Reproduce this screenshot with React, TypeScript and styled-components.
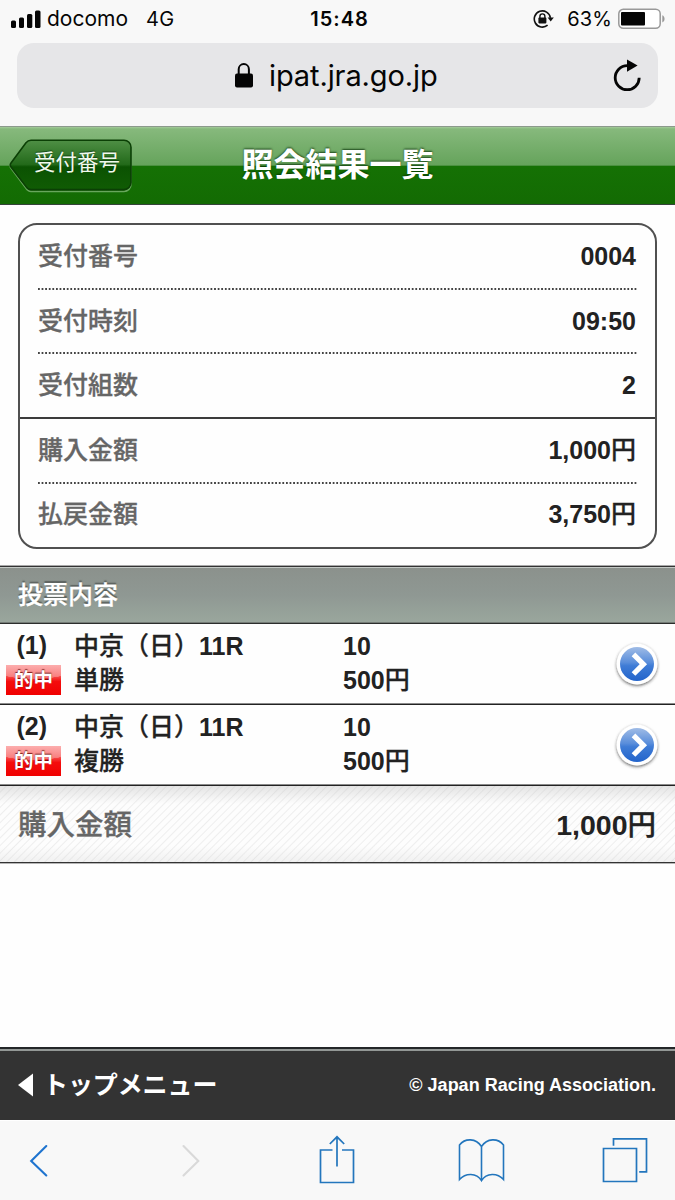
import React from "react";
import styled, { createGlobalStyle } from "styled-components";

const GlobalStyle = createGlobalStyle`
  * { box-sizing: border-box; }
  body { margin: 0; background: #fefefe; }
`;

const jp = `"Liberation Sans", "Noto Sans CJK JP", sans-serif`;
const system = `Inter, "Liberation Sans", sans-serif`;

const Screen = styled.div`
  width: 675px;
  height: 1200px;
  display: flex;
  flex-direction: column;
  overflow: hidden;
  background: #fefefe;
  color: #222;
  font-family: ${jp};
  font-weight: 700;
`;

/* ---------- Browser chrome ---------- */

const Chrome = styled.header`
  height: 126px;
  flex: none;
  background: #f8f8f8;
  color: #050505;
  font-family: ${system};
  font-weight: 400;
`;

const StatusBar = styled.div`
  height: 43px;
  display: grid;
  grid-template-columns: 1fr auto 1fr;
  align-items: center;
  padding: 0 10px 5px 11px;
  font-size: 20px;
  line-height: 24px;
`;

const Carrier = styled.div`
  display: flex;
  align-items: center;
`;

const CarrierName = styled.span`
  margin-left: 6px;
  width: 99px;
  font-size: 21px;
  letter-spacing: 0;
`;

const Network = styled.span`
  font-size: 20px;
  letter-spacing: 0.4px;
`;

const Clock = styled.div`
  font-weight: 600;
  font-size: 20px;
  letter-spacing: 1px;
  padding-left: 3px;
`;

const Power = styled.div`
  display: flex;
  align-items: center;
  justify-content: flex-end;
`;

const Percent = styled.span`
  margin: 0 6px 0 13px;
  letter-spacing: 0.1px;
`;

const AddressBar = styled.div`
  height: 65px;
  margin: 0 17px;
  padding: 0 17px 0 217px;
  display: flex;
  align-items: center;
  border-radius: 17px;
  background: #e6e6e8;
`;

const Url = styled.span`
  margin-left: 15px;
  flex: 1;
  font-size: 29px;
  letter-spacing: -0.1px;
  line-height: 36px;
`;

/* ---------- Page header ---------- */

const TitleBar = styled.div`
  height: 79px;
  flex: none;
  display: grid;
  grid-template-columns: 1fr auto 1fr;
  align-items: center;
  padding: 0 9px;
  border-top: 1px solid #8c9a8c;
  border-bottom: 1px solid #35433a;
  background: linear-gradient(#a5cb9b 0, #86b97c 2px, #65a35b 50%, #4b9140 38px, #157104 39px, #136b03 100%);
`;

const BackButton = styled.button`
  width: 124px;
  height: 56px;
  padding: 0;
  border: 0;
  background: none;
  display: grid;
  color: #f1f9ee;
  font: 400 21.5px/51px ${jp};
  > * { grid-area: 1 / 1; }
`;

const BackLabel = styled.span`
  z-index: 1;
  padding-left: 25px;
  text-align: left;
  text-shadow: 0 -1px 1px rgba(0, 40, 0, 0.6);
`;

const Title = styled.h1`
  margin: 0;
  padding-bottom: 1px;
  color: #fff;
  font-size: 32px;
  line-height: 40px;
  font-weight: 700;
  text-shadow: 0 -1px 2px rgba(0, 40, 0, 0.75);
`;

/* ---------- Summary card ---------- */

const Card = styled.dl`
  margin: 18px 18px 0;
  height: 326px;
  flex: none;
  border: 2px solid #505050;
  border-radius: 19px;
  display: grid;
  grid-template-rows: 65px 64px 65px 65px 63px;
`;

const CardRow = styled.div<{ $line: "dotted" | "solid" | "none" }>`
  display: flex;
  justify-content: space-between;
  align-items: center;
  margin: ${(p) => (p.$line === "solid" ? "0" : "0 18px")};
  padding: ${(p) => (p.$line === "solid" ? "0 18px 1px" : "0 0 3px")};
  font-size: 25px;
  line-height: 36px;
  border-bottom: ${(p) => (p.$line === "solid" ? "2px solid #3c3c3c" : "0")};
  background: ${(p) =>
    p.$line === "dotted"
      ? "linear-gradient(90deg, #444 1.8px, transparent 1.8px) 0 100% / 3.6px 2px repeat-x"
      : "none"};
`;

const Label = styled.dt`
  color: #666;
  font-weight: 500;
  -webkit-text-stroke: 0.3px #666;
`;

const Value = styled.dd`
  margin: 0 1px 0 0;
`;

const Yen = styled.span`
  font-weight: 500;
  -webkit-text-stroke: 0.3px #222;
`;

/* ---------- Bets ---------- */

const SectionTitle = styled.h2`
  margin: 17px 0 0;
  height: 58px;
  flex: none;
  padding: 0 18px;
  border-top: 1px solid #333;
  border-bottom: 1px solid #2c2e2c;
  box-shadow: 0 -1px #a8a8a8, inset 0 1px #c3c8c4, inset 0 -1px #747b76;
  background: linear-gradient(#8b918c, #8f9893 50%, #9aa79d);
  color: #fff;
  font-size: 25px;
  line-height: 57px;
  font-weight: 500;
  -webkit-text-stroke: 0.3px #fff;
  text-shadow: 0 -2px 1px rgba(70, 75, 72, 0.7);
`;

const Bet = styled.div`
  height: 81px;
  flex: none;
  display: grid;
  grid-template-columns: 68px 269px 1fr 48px;
  align-items: center;
  padding: 1px 14px 0 6px;
  border-bottom: 1px solid #222;
  box-shadow: inset 0 -1px #8a8a8a;
  font-size: 25px;
  line-height: 34px;
`;

const BetColumn = styled.div`
  display: flex;
  flex-direction: column;
  height: 72px;
`;

const BetNumber = styled.span`
  padding-left: 10.5px;
  height: 36px;
  line-height: 33px;
`;

const Hit = styled.span`
  width: 55px;
  height: 30px;
  color: #fff;
  font-size: 19.5px;
  line-height: 30px;
  text-align: center;
  background:
    radial-gradient(ellipse 46px 14px at 50% 0, rgba(255, 255, 255, 0.28) 98%, transparent 100%),
    linear-gradient(#fb8e8e 0, #f75454 35%, #f40d0d 55%, #f00000);
  text-shadow: 0 -1px 1px rgba(90, 0, 0, 0.8);
`;

const Line = styled.span`
  height: 34px;
  white-space: nowrap;
  font-weight: 500;
  -webkit-text-stroke: 0.3px #222;
`;

const Num = styled.span`
  font-weight: 700;
  -webkit-text-stroke: 0;
`;

const Total = styled.div`
  height: 77px;
  flex: none;
  display: flex;
  justify-content: space-between;
  align-items: center;
  padding: 1px 19px 0 18px;
  border-bottom: 1px solid #333;
  box-shadow: 0 1px #b5b5b5;
  font-size: 28.5px;
  line-height: 40px;
  background:
    linear-gradient(rgba(190, 190, 190, 0.4), transparent 18px, transparent 60px, rgba(205, 205, 205, 0.25)),
    repeating-linear-gradient(135deg, #fdfdfd 0, #fdfdfd 3.4px, #eeeeee 4.4px, #fdfdfd 5.4px);
`;

/* ---------- Footer ---------- */

const Footer = styled.footer`
  height: 73px;
  flex: none;
  margin-top: auto;
  display: flex;
  align-items: center;
  justify-content: space-between;
  padding: 0 19px 0 18px;
  border-top: 2px solid #232628;
  box-shadow: inset 0 2px #939896;
  background: #333;
  color: #fff;
`;

const TopMenu = styled.a`
  display: flex;
  align-items: center;
  gap: 10px;
  font-size: 25px;
  line-height: 36px;
  letter-spacing: -0.1px;
`;

const Copyright = styled.small`
  font-size: 18px;
  line-height: 24px;
`;

const Toolbar = styled.nav`
  height: 80px;
  flex: none;
  display: grid;
  grid-template-columns: 152px 137px 139.5px 144px auto;
  align-items: center;
  padding: 1px 0 0 29px;
  border-top: 1px solid #fff;
  background: #f8f8f8;
  color: #2376bd;
`;

const SignalIcon = () => (
  <svg width="30" height="19" viewBox="0 0 30 19" fill="#050505">
    <rect x="0" y="10.5" width="5" height="7.5" rx="1.5" />
    <rect x="8" y="7.5" width="5" height="10.5" rx="1.5" />
    <rect x="16" y="4" width="5.3" height="14" rx="1.5" />
    <rect x="24" y="0.4" width="5.5" height="17.6" rx="1.5" />
  </svg>
);

const RotationLockIcon = () => (
  <svg width="21" height="20" viewBox="0 0 21 20" fill="none" stroke="#111" strokeWidth="1.6">
    <path d="M14.6 16.2A8.1 8.1 0 1 1 17.4 8.8" />
    <path d="M14.6 8.4h6.2l-3.1 4z" fill="#111" stroke="none" />
    <path d="M6.9 9V7.4a2.5 2.5 0 0 1 5 0V9" strokeWidth="1.4" />
    <rect x="5.4" y="8.6" width="8" height="5.8" rx="0.8" fill="#111" stroke="none" />
  </svg>
);

const BatteryIcon = () => (
  <svg width="47" height="22" viewBox="0 0 47 22">
    <rect x="0.8" y="1.3" width="41.4" height="19" rx="4.5" fill="#fff" stroke="#999" strokeWidth="1.5" />
    <rect x="3" y="4" width="24" height="13.5" rx="1" fill="#050505" />
    <path d="M44.3 7.2c3 1 3 6.2 0 7.2z" fill="#999" />
  </svg>
);

const LockIcon = () => (
  <svg width="20" height="28" viewBox="0 0 20 28">
    <path d="M4.7 13V7.2a5.1 5.1 0 0 1 10.2 0V13" fill="none" stroke="#050505" strokeWidth="2" />
    <rect x="1" y="11.5" width="18" height="14" rx="2" fill="#050505" />
  </svg>
);

const ReloadIcon = () => (
  <svg width="28" height="34" viewBox="0 0 28 34">
    <path d="M15.5 6.7H14.2A12 12 0 1 0 26.2 18.7" fill="none" stroke="#050505" strokeWidth="2.8" />
    <path d="M14 0.6v12.2L24.6 6.4z" fill="#050505" />
  </svg>
);

const BackShape = () => (
  <svg width="124" height="56" viewBox="0 0 124 56">
    <defs>
      <linearGradient id="back" x1="0" y1="0" x2="0" y2="1">
        <stop offset="0" stopColor="#4f8f45" />
        <stop offset="0.49" stopColor="#236a1a" />
        <stop offset="0.54" stopColor="#0b5202" />
        <stop offset="1" stopColor="#105c04" />
      </linearGradient>
    </defs>
    <path
      d="M22 2.5H115a7 7 0 0 1 7 7V45.5a7 7 0 0 1-7 7H22q-3 0-5-3L2 29.5q-1.5-2 0-4L17 5q2-2.5 5-2.5z"
      fill="none"
      stroke="#8cbf83"
      strokeOpacity="0.7"
      strokeWidth="1.5"
      transform="translate(0 0.9)"
    />
    <path
      d="M22 2.2H115a7 7 0 0 1 7 7V44.6a7 7 0 0 1-7 7H22q-3 0-5-3L2 29q-1.5-2 0-4L17 4.7q2-2.5 5-2.5z"
      fill="url(#back)"
      stroke="#0b3f05"
      strokeWidth="1.6"
    />
  </svg>
);

const DetailIcon = () => (
  <svg width="48" height="50" viewBox="0 0 48 50">
    <defs>
      <linearGradient id="ball" x1="0" y1="0" x2="0" y2="1">
        <stop offset="0" stopColor="#a0bce6" />
        <stop offset="0.45" stopColor="#5a8edb" />
        <stop offset="0.55" stopColor="#3f7cd6" />
        <stop offset="1" stopColor="#2364cb" />
      </linearGradient>
      <filter id="drop" x="-20%" y="-20%" width="140%" height="150%">
        <feDropShadow dx="0" dy="1.3" stdDeviation="1.5" floodColor="#333" floodOpacity="0.75" />
      </filter>
    </defs>
    <circle cx="24" cy="24" r="20.4" fill="#fff" filter="url(#drop)" />
    <circle cx="24" cy="24" r="17" fill="url(#ball)" />
    <path d="M20.5 14.4 30.4 24.2l-9.9 9.8" fill="none" stroke="#fff" strokeWidth="5.2" />
  </svg>
);

const MenuTriangle = () => (
  <svg width="15" height="24" viewBox="0 0 15 24">
    <path d="M0 12 15 0.5v23z" fill="#fff" />
  </svg>
);

const ChevronIcon = ({ forward = false }: { forward?: boolean }) => (
  <svg width="20" height="34" viewBox="0 0 20 34" fill="none" strokeWidth="2.1" strokeLinecap="round">
    {forward ? (
      <path d="M2.5 2 17.3 17 2.5 31.5" stroke="#d9d9d9" />
    ) : (
      <path d="M17.3 2 2.2 17l15.1 14.5" stroke="#1f74cf" />
    )}
  </svg>
);

const ShareIcon = () => (
  <svg width="38" height="52" viewBox="0 0 38 52" fill="none" stroke="currentColor" strokeWidth="1.7">
    <path d="M14.5 15H2.5v32.5h33v-32.5H24M19 31.5V2.5M11.8 9 19 1.8l7.2 7.2" />
  </svg>
);

const BookIcon = () => (
  <svg width="47" height="46" viewBox="0 0 47 46" fill="none" stroke="currentColor" strokeWidth="1.6">
    <path d="M23.5 8.5C18-.1 7-.1 1.5 7v34.5c6-6.6 17-7 22 1.2 5-8.2 16-7.8 22-1.2V7C40-.1 29-.1 23.5 8.5zV43" />
  </svg>
);

const TabsIcon = () => (
  <svg width="46" height="46" viewBox="0 0 46 46" fill="none" stroke="currentColor" strokeWidth="1.7">
    <path d="M1.5 10.5h33v33h-33zM11.5 7.8V0.9h33v32.9h-7.3" />
  </svg>
);

type Row = { label: string; value: string; yen?: boolean; line: "dotted" | "solid" | "none" };

const rows: Row[] = [
  { label: "受付番号", value: "0004", line: "dotted" },
  { label: "受付時刻", value: "09:50", line: "dotted" },
  { label: "受付組数", value: "2", line: "solid" },
  { label: "購入金額", value: "1,000", yen: true, line: "dotted" },
  { label: "払戻金額", value: "3,750", yen: true, line: "none" },
];

const bets = [
  { id: "(1)", place: "中京（日）", race: "11R", kind: "単勝", horse: "10", amount: "500" },
  { id: "(2)", place: "中京（日）", race: "11R", kind: "複勝", horse: "10", amount: "500" },
];

export default function App() {
  return (
    <Screen lang="ja">
      <GlobalStyle />
      <Chrome>
        <StatusBar>
          <Carrier>
            <SignalIcon />
            <CarrierName>docomo</CarrierName>
            <Network>4G</Network>
          </Carrier>
          <Clock>15:48</Clock>
          <Power>
            <RotationLockIcon />
            <Percent>63%</Percent>
            <BatteryIcon />
          </Power>
        </StatusBar>
        <AddressBar>
          <LockIcon />
          <Url>ipat.jra.go.jp</Url>
          <ReloadIcon />
        </AddressBar>
      </Chrome>

      <TitleBar>
        <BackButton>
          <BackShape />
          <BackLabel>受付番号</BackLabel>
        </BackButton>
        <Title>照会結果一覧</Title>
      </TitleBar>

      <Card>
        {rows.map((r) => (
          <CardRow key={r.label} $line={r.line}>
            <Label>{r.label}</Label>
            <Value>
              {r.value}
              {r.yen && <Yen>円</Yen>}
            </Value>
          </CardRow>
        ))}
      </Card>

      <SectionTitle>投票内容</SectionTitle>
      {bets.map((b) => (
        <Bet key={b.id}>
          <BetColumn>
            <BetNumber>{b.id}</BetNumber>
            <Hit>的中</Hit>
          </BetColumn>
          <BetColumn>
            <Line>
              {b.place}
              <Num>{b.race}</Num>
            </Line>
            <Line>{b.kind}</Line>
          </BetColumn>
          <BetColumn>
            <Line>
              <Num>{b.horse}</Num>
            </Line>
            <Line>
              <Num>{b.amount}</Num>円
            </Line>
          </BetColumn>
          <DetailIcon />
        </Bet>
      ))}
      <Total>
        <Label as="span">購入金額</Label>
        <span>
          1,000<Yen>円</Yen>
        </span>
      </Total>

      <Footer>
        <TopMenu>
          <MenuTriangle />
          トップメニュー
        </TopMenu>
        <Copyright>© Japan Racing Association.</Copyright>
      </Footer>
      <Toolbar>
        <ChevronIcon />
        <ChevronIcon forward />
        <ShareIcon />
        <BookIcon />
        <TabsIcon />
      </Toolbar>
    </Screen>
  );
}
